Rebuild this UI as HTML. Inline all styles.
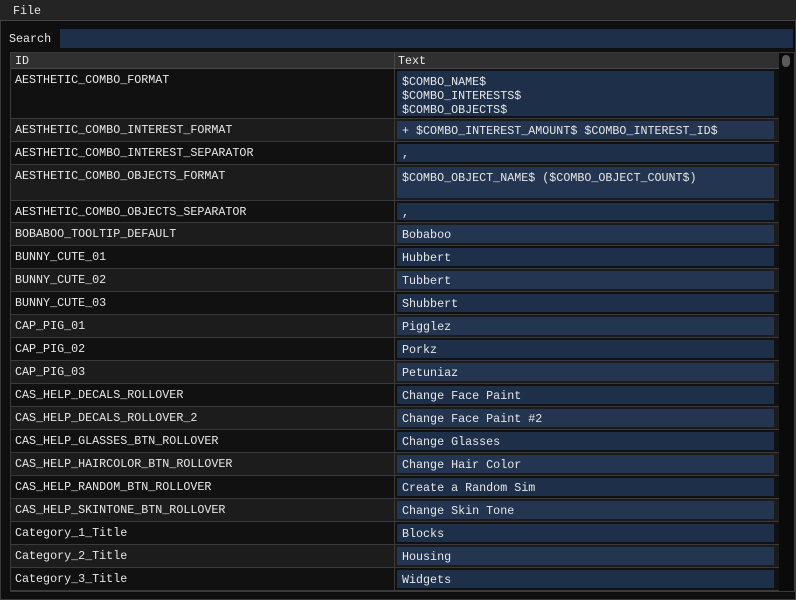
<!DOCTYPE html>
<html><head><meta charset="utf-8"><style>
*{margin:0;padding:0;box-sizing:border-box}
body{width:796px;height:600px;background:#0f0f0f;font-family:"Liberation Mono",monospace;font-size:11.7px;color:#e8e8e8;position:relative;overflow:hidden}
.a{position:absolute;white-space:pre}
#menu{left:0;top:0;width:796px;height:21px;background:#242424;border-bottom:1px solid #444}
#win{left:0;top:21px;width:796px;height:579px;border:1px solid #3a3a3a;border-top:none}
.row{position:absolute;left:11px;width:768px;border-bottom:1px solid #3a3a3a;white-space:pre}
.row .id{position:absolute;left:4px;top:4px;line-height:14px}
.row .cd{position:absolute;left:383px;top:0;bottom:0;width:1px;background:#3a3a3a}
.row .in{position:absolute;left:386px;width:377px;top:2px;bottom:2px;background:#1e2f49;padding:3px 5px 0;line-height:15px}
.row.l{background:#1c1c1c}.row.d{background:#111}
.row.l .in{background:#233550}
</style></head><body>
<div class="a" id="menu"><span class="a" style="left:13px;top:4px">File</span></div>
<div class="a" id="win"></div>
<div class="a" style="left:9px;top:32px">Search</div>
<div class="a" style="left:60px;top:29px;width:733px;height:19px;background:#1e2f49"></div>
<div class="a" style="left:10px;top:52px;width:785px;height:540px;border:1px solid #3a3a3a"></div>
<div class="a" style="left:11px;top:53px;width:768px;height:16px;background:#303030;border-bottom:1px solid #4a4a4a"></div>
<div class="a" style="left:15px;top:54px">ID</div>
<div class="a" style="left:394px;top:53px;width:1px;height:16px;background:#4a4a4a"></div>
<div class="a" style="left:398px;top:54px">Text</div>
<div class="a" style="left:779px;top:53px;width:15px;height:538px;background:#0a0a0a"></div>
<div class="a" style="left:782px;top:55px;width:8px;height:12px;border-radius:4px;background:#5a5a5a"></div>

<div class="row d" style="top:69px;height:50px"><div class="id">AESTHETIC_COMBO_FORMAT</div><div class="cd"></div><div class="in" style="padding-top:4px;line-height:14px">$COMBO_NAME$
$COMBO_INTERESTS$
$COMBO_OBJECTS$</div></div>
<div class="row l" style="top:119px;height:23px"><div class="id">AESTHETIC_COMBO_INTEREST_FORMAT</div><div class="cd"></div><div class="in">+ $COMBO_INTEREST_AMOUNT$ $COMBO_INTEREST_ID$</div></div>
<div class="row d" style="top:142px;height:23px"><div class="id">AESTHETIC_COMBO_INTEREST_SEPARATOR</div><div class="cd"></div><div class="in">,</div></div>
<div class="row l" style="top:165px;height:36px"><div class="id">AESTHETIC_COMBO_OBJECTS_FORMAT</div><div class="cd"></div><div class="in" style="padding-top:4px">$COMBO_OBJECT_NAME$ ($COMBO_OBJECT_COUNT$)</div></div>
<div class="row d" style="top:201px;height:22px"><div class="id">AESTHETIC_COMBO_OBJECTS_SEPARATOR</div><div class="cd"></div><div class="in">,</div></div>
<div class="row l" style="top:223px;height:23px"><div class="id">BOBABOO_TOOLTIP_DEFAULT</div><div class="cd"></div><div class="in">Bobaboo</div></div>
<div class="row d" style="top:246px;height:23px"><div class="id">BUNNY_CUTE_01</div><div class="cd"></div><div class="in">Hubbert</div></div>
<div class="row l" style="top:269px;height:23px"><div class="id">BUNNY_CUTE_02</div><div class="cd"></div><div class="in">Tubbert</div></div>
<div class="row d" style="top:292px;height:23px"><div class="id">BUNNY_CUTE_03</div><div class="cd"></div><div class="in">Shubbert</div></div>
<div class="row l" style="top:315px;height:23px"><div class="id">CAP_PIG_01</div><div class="cd"></div><div class="in">Pigglez</div></div>
<div class="row d" style="top:338px;height:23px"><div class="id">CAP_PIG_02</div><div class="cd"></div><div class="in">Porkz</div></div>
<div class="row l" style="top:361px;height:23px"><div class="id">CAP_PIG_03</div><div class="cd"></div><div class="in">Petuniaz</div></div>
<div class="row d" style="top:384px;height:23px"><div class="id">CAS_HELP_DECALS_ROLLOVER</div><div class="cd"></div><div class="in">Change Face Paint</div></div>
<div class="row l" style="top:407px;height:23px"><div class="id">CAS_HELP_DECALS_ROLLOVER_2</div><div class="cd"></div><div class="in">Change Face Paint #2</div></div>
<div class="row d" style="top:430px;height:23px"><div class="id">CAS_HELP_GLASSES_BTN_ROLLOVER</div><div class="cd"></div><div class="in">Change Glasses</div></div>
<div class="row l" style="top:453px;height:23px"><div class="id">CAS_HELP_HAIRCOLOR_BTN_ROLLOVER</div><div class="cd"></div><div class="in">Change Hair Color</div></div>
<div class="row d" style="top:476px;height:23px"><div class="id">CAS_HELP_RANDOM_BTN_ROLLOVER</div><div class="cd"></div><div class="in">Create a Random Sim</div></div>
<div class="row l" style="top:499px;height:23px"><div class="id">CAS_HELP_SKINTONE_BTN_ROLLOVER</div><div class="cd"></div><div class="in">Change Skin Tone</div></div>
<div class="row d" style="top:522px;height:23px"><div class="id">Category_1_Title</div><div class="cd"></div><div class="in">Blocks</div></div>
<div class="row l" style="top:545px;height:23px"><div class="id">Category_2_Title</div><div class="cd"></div><div class="in">Housing</div></div>
<div class="row d" style="top:568px;height:23px"><div class="id">Category_3_Title</div><div class="cd"></div><div class="in">Widgets</div></div>
</body></html>
